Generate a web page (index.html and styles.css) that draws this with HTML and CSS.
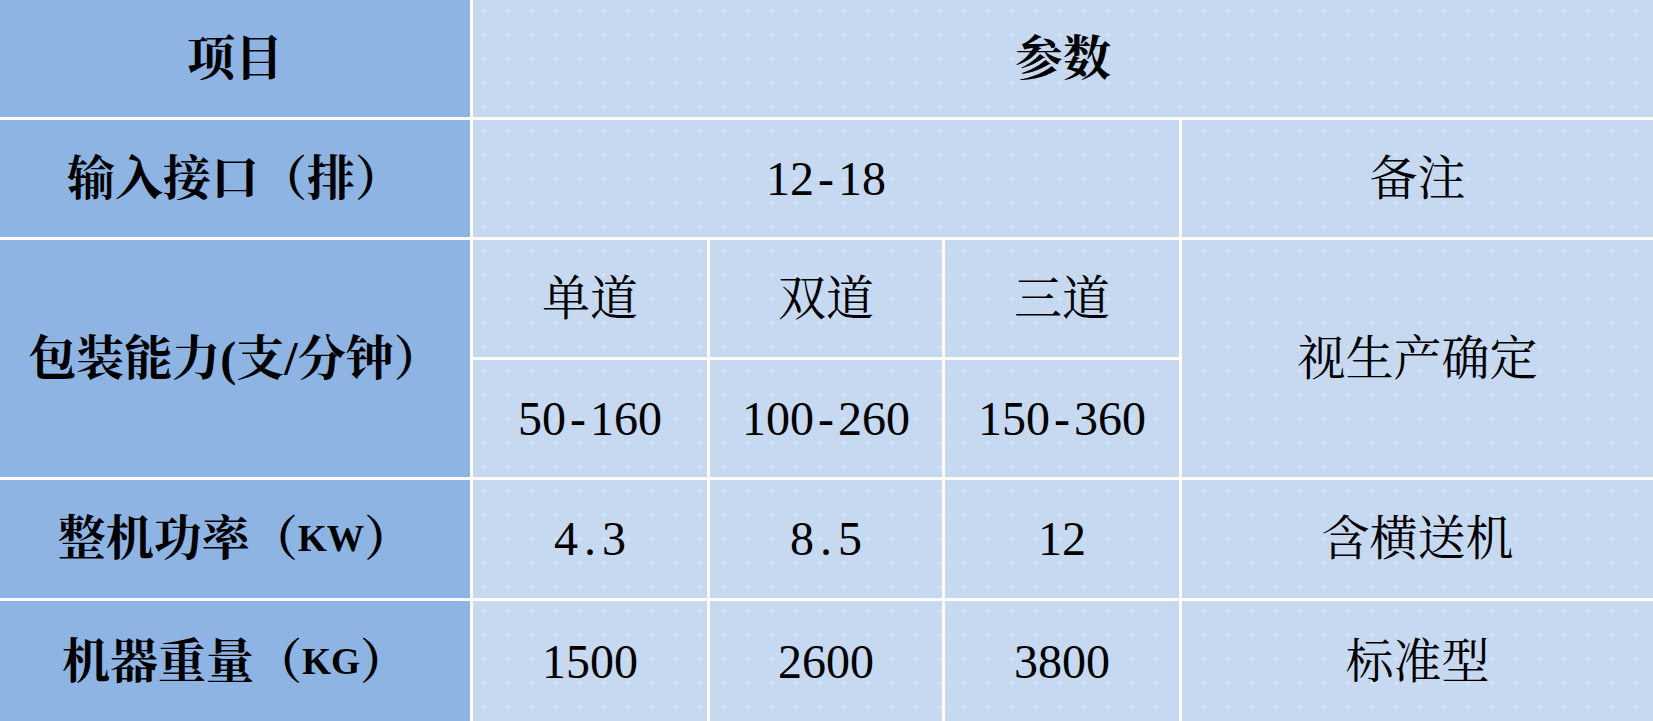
FILE: index.html
```html
<!DOCTYPE html>
<html lang="zh-CN">
<head>
<meta charset="utf-8">
<title>参数表</title>
<link rel="stylesheet" href="styles.css">
</head>
<body>
<div class="spec">
  <div class="cell head label">项目</div>
  <div class="cell head span-4">参数</div>

  <div class="cell head label">输入接口（排）</div>
  <div class="cell span-3">12<span class="hw">-</span>18</div>
  <div class="cell">备注</div>

  <div class="cell head label rows-2">包装能力(支/分钟）</div>
  <div class="cell">单道</div>
  <div class="cell">双道</div>
  <div class="cell">三道</div>
  <div class="cell rows-2">视生产确定</div>
  <div class="cell">50<span class="hw">-</span>160</div>
  <div class="cell">100<span class="hw">-</span>260</div>
  <div class="cell">150<span class="hw">-</span>360</div>

  <div class="cell head label">整机功率（<span class="latin">KW</span>）</div>
  <div class="cell">4<span class="hw">.</span>3</div>
  <div class="cell">8<span class="hw">.</span>5</div>
  <div class="cell">12</div>
  <div class="cell">含横送机</div>

  <div class="cell head label">机器重量（<span class="latin">KG</span>）</div>
  <div class="cell">1500</div>
  <div class="cell">2600</div>
  <div class="cell">3800</div>
  <div class="cell">标准型</div>
</div>
</body>
</html>
```

FILE: styles.css
```css
html, body {
  margin: 0;
  padding: 0;
  background: #ffffff;
}

.spec {
  display: grid;
  grid-template-columns: 470px 234px 232px 234px 1fr;
  grid-template-rows: 117px 117px 117px 117px 118px 121px;
  gap: 3px;
  width: 1653px;
  height: 721px;
  background: #ffffff;
  font-family: "Liberation Serif", "Noto Serif CJK SC", "Noto Sans CJK SC", serif;
  font-size: 48px;
  color: #000000;
}

.cell {
  display: flex;
  align-items: center;
  justify-content: center;
  background-color: #c6d9f1;
  background-image: radial-gradient(circle, rgba(214, 236, 252, 0.95) 0, rgba(214, 236, 252, 0) 2.5px);
  background-size: 24px 24px;
  background-position: -8px -1px;
  background-attachment: fixed;
  white-space: nowrap;
  line-height: 1;
}

.head {
  font-weight: 700;
}

.label {
  background-color: #8eb4e3;
  background-image: none;
}

.span-4 {
  grid-column: span 4;
}

.span-3 {
  grid-column: span 3;
}

.rows-2 {
  grid-row: span 2;
}

.hw {
  display: inline-block;
  width: 0.5em;
  text-align: center;
}

.latin {
  font-size: 0.78em;
}
```
